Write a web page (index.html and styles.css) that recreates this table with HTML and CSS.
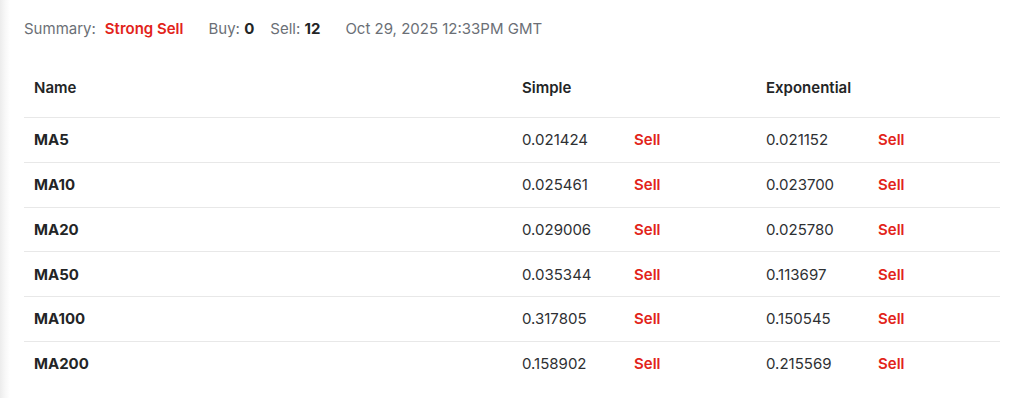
FILE: index.html
```html
<!DOCTYPE html>
<html lang="en">
<head>
    <meta charset="UTF-8">
    <meta name="viewport" content="width=device-width, initial-scale=1.0">
    <title>Moving Averages</title>
    <link rel="stylesheet" href="styles.css">
</head>
<body>
    <div class="panel">
        <div class="summary">
            <span class="label">Summary:</span>
            <span class="signal sell strong">Strong Sell</span>
            <span class="count">Buy: <b>0</b></span>
            <span class="count">Sell: <b>12</b></span>
            <span class="date">Oct 29, 2025 12:33PM GMT</span>
        </div>
        <table class="ma-table">
            <thead>
                <tr>
                    <th class="col-name">Name</th>
                    <th class="col-ma">Simple</th>
                    <th class="col-ma">Exponential</th>
                </tr>
            </thead>
            <tbody>
                <tr>
                    <td class="name">MA5</td>
                    <td><span class="value">0.021424</span><span class="sell">Sell</span></td>
                    <td><span class="value">0.021152</span><span class="sell">Sell</span></td>
                </tr>
                <tr>
                    <td class="name">MA10</td>
                    <td><span class="value">0.025461</span><span class="sell">Sell</span></td>
                    <td><span class="value">0.023700</span><span class="sell">Sell</span></td>
                </tr>
                <tr>
                    <td class="name">MA20</td>
                    <td><span class="value">0.029006</span><span class="sell">Sell</span></td>
                    <td><span class="value">0.025780</span><span class="sell">Sell</span></td>
                </tr>
                <tr>
                    <td class="name">MA50</td>
                    <td><span class="value">0.035344</span><span class="sell">Sell</span></td>
                    <td><span class="value">0.113697</span><span class="sell">Sell</span></td>
                </tr>
                <tr>
                    <td class="name">MA100</td>
                    <td><span class="value">0.317805</span><span class="sell">Sell</span></td>
                    <td><span class="value">0.150545</span><span class="sell">Sell</span></td>
                </tr>
                <tr>
                    <td class="name">MA200</td>
                    <td><span class="value">0.158902</span><span class="sell">Sell</span></td>
                    <td><span class="value">0.215569</span><span class="sell">Sell</span></td>
                </tr>
            </tbody>
        </table>
    </div>
</body>
</html>
```

FILE: styles.css
```css
body {
    margin: 0;
    padding: 0;
    font-family: Inter, "Liberation Sans", Arial, sans-serif;
    font-size: 15px;
    color: #232526;
    background: linear-gradient(to right, #ececec 0, #f7f7f7 5px, #fff 10px) no-repeat;
    background-color: #fff;
}

.panel {
    padding: 19px 24px 20px 24px;
}

.summary {
    display: flex;
    align-items: baseline;
    line-height: 20px;
    color: #6b6f76;
}

.summary .label {
    margin-right: 9px;
}

.summary .strong {
    margin-right: 25px;
}

.summary .count {
    margin-right: 16px;
}

.summary .count b {
    color: #232526;
    font-weight: 700;
}

.summary .date {
    margin-left: 9px;
}

.sell {
    color: #e2231a;
    font-weight: 600;
}

.ma-table {
    width: 976px;
    margin-top: 19px;
    border-collapse: collapse;
    table-layout: fixed;
}

.ma-table th {
    text-align: left;
    font-weight: 600;
    padding: 0 10px;
    height: 59px;
    border-bottom: 1px solid #e8e8e8;
}

.col-name {
    width: 468px;
}

.col-ma {
    width: 224px;
}

.ma-table td {
    padding: 0 10px;
    height: 43.75px;
    border-bottom: 1px solid #e8e8e8;
    color: #2e3033;
}

.ma-table tbody tr:last-child td {
    border-bottom: none;
}

.ma-table td.name {
    font-weight: 700;
    color: #232526;
}

.ma-table td .sell {
    color: #e2231a;
}

.value {
    display: inline-block;
    width: 112px;
}
```
